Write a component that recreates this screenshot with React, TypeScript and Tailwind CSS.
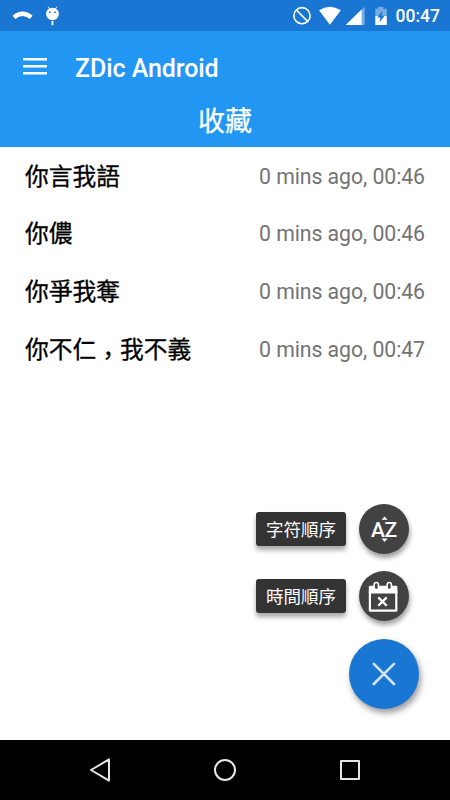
import { ReactNode } from "react";

const FAVORITES = [
  { word: "你言我語", time: "0 mins ago, 00:46" },
  { word: "你儂", time: "0 mins ago, 00:46" },
  { word: "你爭我奪", time: "0 mins ago, 00:46" },
  { word: "你不仁，我不義", time: "0 mins ago, 00:47" },
];

function StatusBar() {
  return (
    <div className="flex h-[31px] shrink-0 items-center justify-between bg-[#1976d2] text-white">
      <svg width="80" height="31" viewBox="0 0 80 31" fill="currentColor">
        <path d="M13.9 17.4Q22.6 10.2 31.2 17.4" fill="none" stroke="currentColor" strokeWidth="4.4" />
        <path d="M48.2 6.8l2 3M56.8 6.8l-2 3" stroke="currentColor" strokeWidth="1" />
        <ellipse cx="52.5" cy="14" rx="6.4" ry="6.2" />
        <circle cx="50" cy="12.2" r=".9" fill="#1976d2" />
        <circle cx="55" cy="12.2" r=".9" fill="#1976d2" />
        <path d="M51.6 21h1.8v4.2h-1.8z" />
      </svg>
      <div className="flex items-center gap-[2px] pr-[10px]">
        <svg width="104" height="31" viewBox="290 0 104 31" fill="currentColor">
          <circle cx="302" cy="15.7" r="8.1" fill="none" stroke="currentColor" strokeWidth="1.6" />
          <path d="M296.4 10l11.2 11.4" stroke="currentColor" strokeWidth="1.6" />
          <path d="M319 10.3Q329.9 3 340.8 10.3L329.9 24.8z" />
          <path d="M345.7 25L364.7 6.7V25z" opacity=".4" />
          <path d="M345.7 25L361.6 9.6V25z" />
          <path d="M375.3 8.8h3V6.7h5v2.1h3.5V16h-11.5z" opacity=".4" />
          <path d="M375.3 16h11.5v9h-11.5z" />
          <path d="M382.4 11l-5.2 6.4h3.2l-.9 4.8 5.3-6.5h-3.3z" fill="#1976d2" />
        </svg>
        <span className="pt-px text-[17.5px] leading-[31px] font-medium">00:47</span>
      </div>
    </div>
  );
}

function AppBar() {
  return (
    <header className="h-[116px] shrink-0 bg-[#2196f3] text-white">
      <div className="flex h-[70px] items-center pl-[23px]">
        <svg width="24" height="18" viewBox="0 0 24 18" stroke="currentColor" strokeWidth="2.6">
          <path d="M0 2.3h24M0 9.3h24M0 16.2h24" />
        </svg>
        <h1 className="pt-[5px] pl-7 text-[25px] leading-8 font-medium tracking-[-0.08px]">ZDic Android</h1>
      </div>
      <h2 className="pt-px text-center text-[27px] leading-10 font-normal [-webkit-text-stroke:0.3px_currentColor]">收藏</h2>
    </header>
  );
}

function Word({ text }: { text: string }) {
  // the full-width comma sits on the baseline, the TC font centres it
  return (
    <span className="pt-[2px] text-[23.75px] leading-8 text-black [-webkit-text-stroke:0.3px_currentColor]">
      {text.split("").map((char, i) =>
        char === "，" ? (
          <span key={i} className="relative top-[6px]">
            {char}
          </span>
        ) : (
          char
        )
      )}
    </span>
  );
}

function Action({ label, children }: { label: string; children: ReactNode }) {
  return (
    <div className="mr-[10px] flex items-center gap-[13px]">
      <span className="flex h-[34px] w-[90px] items-center justify-center rounded-[3px] bg-[#333] pt-[3px] text-[17.5px] leading-none text-white shadow-[0_4px_5px_rgba(0,0,0,0.35)]">
        {label}
      </span>
      <button className="relative flex size-[50px] items-center justify-center rounded-full bg-[#424242] text-white shadow-[1px_4px_5px_rgba(0,0,0,0.38)]">
        {children}
      </button>
    </div>
  );
}

function FabMenu() {
  return (
    <div className="absolute right-[31px] bottom-[31px] flex flex-col items-end">
      <Action label="字符順序">
        <span className="pt-[2px] text-[21px] leading-none font-medium tracking-[-0.3px]">AZ</span>
        <svg className="absolute inset-0" width="50" height="50" viewBox="0 0 50 50" fill="currentColor">
          <path d="M22.6 15.8l3-3.3 3 3.3zM22.6 34.6l3 3.3 3-3.3z" />
        </svg>
      </Action>
      <div className="h-[17px]" />
      <Action label="時間順序">
        <svg width="50" height="50" viewBox="0 0 50 50" fill="none" stroke="currentColor">
          <path d="M10.9 20V39.6H37.3V20" strokeWidth="2.2" strokeLinejoin="round" />
          <path d="M9.8 16q0-1.2 1.2-1.2h26.2q1.2 0 1.2 1.2v6.4H9.8z" fill="currentColor" stroke="none" />
          <rect x="15.2" y="11.5" width="4.2" height="7.2" rx="2.1" fill="#424242" strokeWidth="1.6" />
          <rect x="28.2" y="11.5" width="4.2" height="7.2" rx="2.1" fill="#424242" strokeWidth="1.6" />
          <path d="M19.3 26.4l8.4 8.4M27.7 26.4l-8.4 8.4" strokeWidth="2.3" />
        </svg>
      </Action>
      <button className="mt-[18px] flex size-[70px] items-center justify-center rounded-full bg-[#1976d2] shadow-[2px_4px_6px_rgba(0,0,0,0.4)]">
        <svg width="24" height="24" viewBox="0 0 24 24" stroke="#d1e4f6" strokeWidth="2.6" strokeLinecap="round">
          <path d="M1.8 1.8l20.2 20.2M22 1.8L1.8 22" />
        </svg>
      </button>
    </div>
  );
}

function NavBar() {
  return (
    <nav className="flex h-[60px] shrink-0 items-center justify-between bg-black px-[88px] text-[#e6e6e6]">
      <svg width="24" height="26" viewBox="0 0 24 26" fill="none" stroke="currentColor" strokeWidth="2" strokeLinejoin="round">
        <path d="M3 13L21 2.4v21.2z" />
      </svg>
      <svg width="24" height="24" viewBox="0 0 24 24" fill="none" stroke="currentColor" strokeWidth="2">
        <circle cx="12" cy="12" r="10" />
      </svg>
      <svg width="24" height="24" viewBox="0 0 24 24" fill="none" stroke="currentColor" strokeWidth="2" strokeLinejoin="round">
        <path d="M3 3h18v18H3z" />
      </svg>
    </nav>
  );
}

export default function App() {
  return (
    <div className="flex h-[800px] w-[450px] flex-col overflow-hidden bg-white font-[Roboto,'Noto_Sans_CJK_TC',sans-serif]">
      <StatusBar />
      <AppBar />
      <main className="relative flex-1">
        <ul>
          {FAVORITES.map((item) => (
            <li key={item.word} className="flex h-[57.6px] items-center justify-between px-[25px]">
              <Word text={item.word} />
              <span className="pt-[2px] text-[21.25px] leading-8 tracking-[-0.06px] text-[#737373]">{item.time}</span>
            </li>
          ))}
        </ul>
        <FabMenu />
      </main>
      <NavBar />
    </div>
  );
}
